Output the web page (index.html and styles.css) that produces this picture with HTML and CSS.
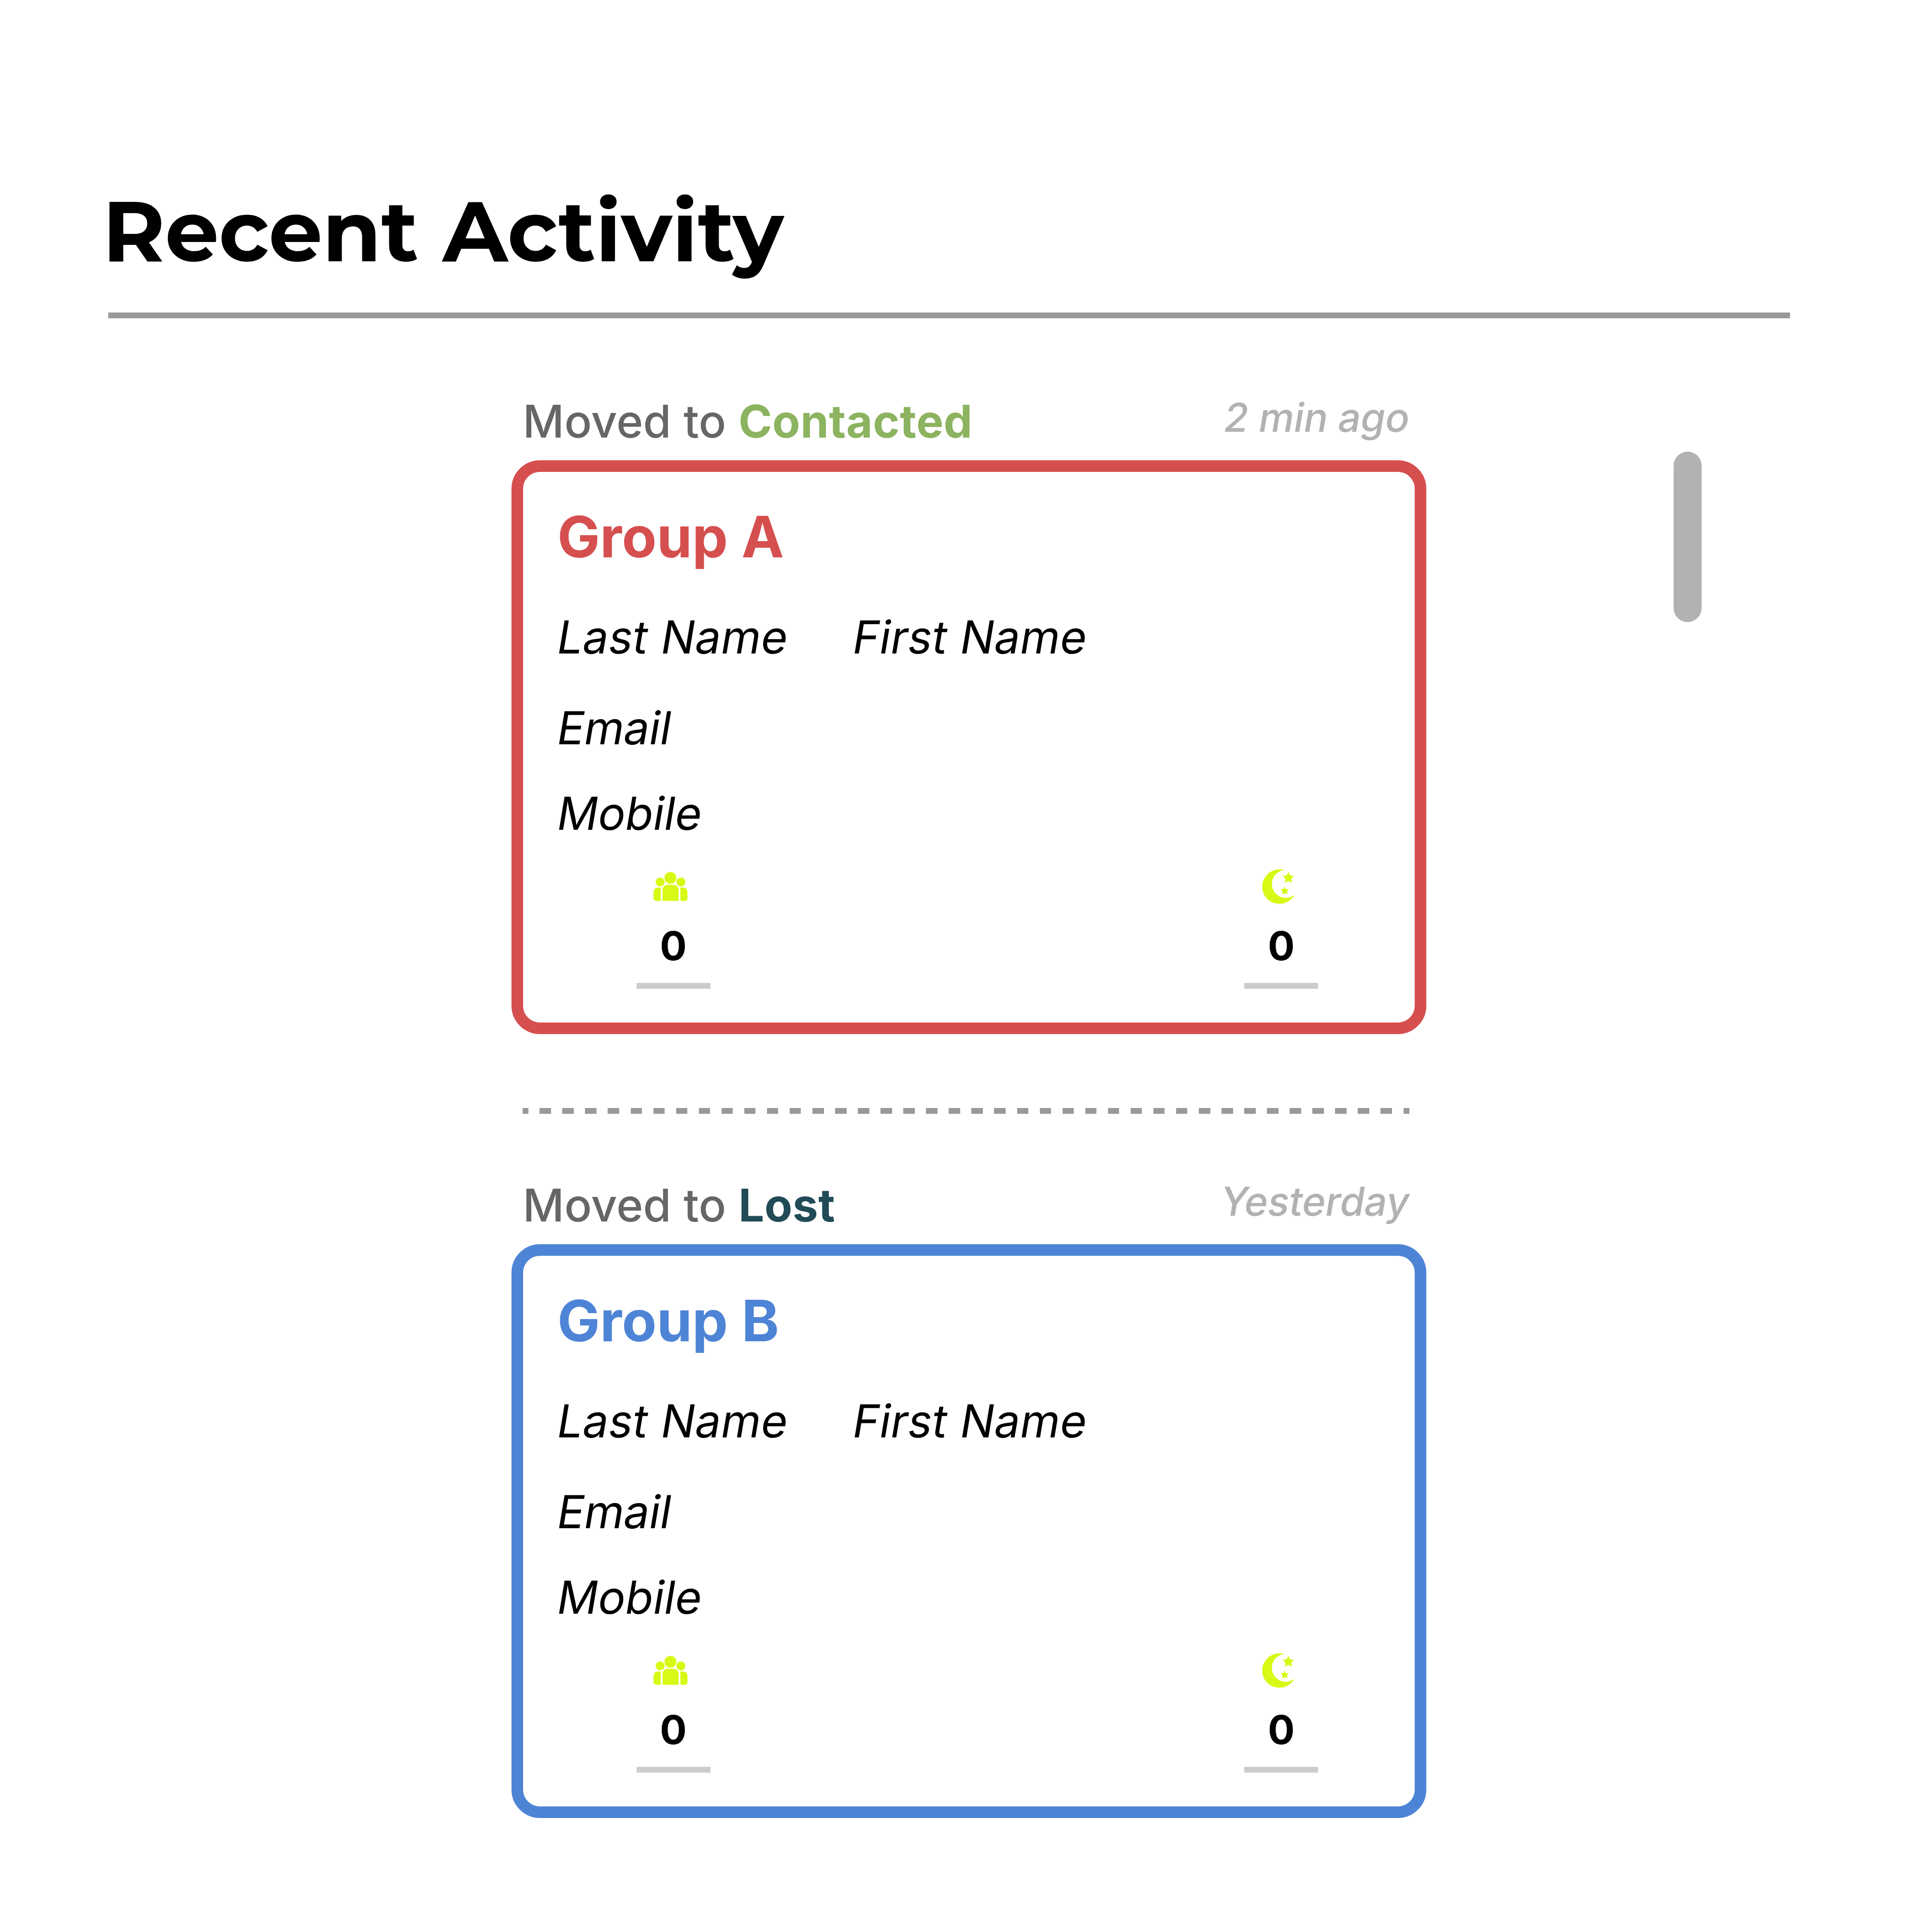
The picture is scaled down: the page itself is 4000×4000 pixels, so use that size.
FILE: index.html
```html
<!DOCTYPE html>
<html lang="en">
<head>
<meta charset="utf-8">
<title>Recent Activity</title>
<link rel="stylesheet" href="styles.css">
</head>
<body>
<svg class="sprite" aria-hidden="true">
  <symbol id="people" viewBox="0 0 212 212">
    <circle cx="105.5" cy="52.5" r="37"/>
    <circle cx="41.5" cy="78" r="28"/>
    <circle cx="170.5" cy="78" r="28"/>
    <path d="M86 96h40a30 30 0 0 1 30 30v65a5 5 0 0 1-5 5H61a5 5 0 0 1-5-5v-65a30 30 0 0 1 30-30z"/>
    <path d="M28 113h19q-2 5-2 12v71H17a17 17 0 0 1-17-17v-38a28 28 0 0 1 28-28z"/>
    <path d="M184 113h-19q2 5 2 12v71h28a17 17 0 0 0 17-17v-38a28 28 0 0 0-28-28z"/>
  </symbol>
  <symbol id="moon" viewBox="0 0 212 212" overflow="visible">
    <path d="M139.700 4.500A107 107 0 1 0 204.700 157.500A86.500 86.500 0 1 1 139.700 4.500z"/>
    <g stroke="#d8f915" stroke-width="3" stroke-linejoin="round">
      <path d="M166.700 18.500L176.500 38.500L199 41L183 58.500L187 80.500L166.700 71L146.500 80.500L150 58.500L134.500 41L157 38.500z"/>
      <path d="M143.700 110L151 124.500L167 127L156 138.500L158.500 152.500L143.700 147L129 152.500L131.500 138.500L120.500 127L136.500 124.500z"/>
    </g>
  </symbol>
</svg>
<main class="page">
  <h1 class="title">Recent Activity</h1>
  <div class="body">
    <section class="feed">
      <article class="entry entry-a">
        <header class="entry-head">
          <p class="move">Moved to <strong class="stage stage-contacted">Contacted</strong></p>
          <time class="when">2 min ago</time>
        </header>
        <div class="card">
          <h2 class="group">Group A</h2>
          <div class="names"><span class="last slanted">Last Name</span><span class="first slanted">First Name</span></div>
          <p class="email slanted">Email</p>
          <p class="mobile slanted">Mobile</p>
          <div class="stats">
            <div class="stat"><svg class="icon"><use href="#people"/></svg><span class="count">0</span></div>
            <div class="stat"><svg class="icon"><use href="#moon"/></svg><span class="count">0</span></div>
          </div>
        </div>
      </article>
      <div class="divider"></div>
      <article class="entry entry-b">
        <header class="entry-head">
          <p class="move">Moved to <strong class="stage stage-lost">Lost</strong></p>
          <time class="when">Yesterday</time>
        </header>
        <div class="card">
          <h2 class="group">Group B</h2>
          <div class="names"><span class="last slanted">Last Name</span><span class="first slanted">First Name</span></div>
          <p class="email slanted">Email</p>
          <p class="mobile slanted">Mobile</p>
          <div class="stats">
            <div class="stat"><svg class="icon"><use href="#people"/></svg><span class="count">0</span></div>
            <div class="stat"><svg class="icon"><use href="#moon"/></svg><span class="count">0</span></div>
          </div>
        </div>
      </article>
    </section>
    <div class="scroll-thumb"></div>
  </div>
</main>
</body>
</html>
```
FILE: styles.css
```css
:root {
  --u: calc(4000px / 340);
}

* {
  box-sizing: border-box;
  margin: 0;
  padding: 0;
}

body {
  background: #fff;
  color: #000;
  font-family: Inter, "Liberation Sans", sans-serif;
}

.sprite {
  position: absolute;
  width: 0;
  height: 0;
}

.page {
  width: 4000px;
  height: 4000px;
  padding: 372.4px calc(25 * var(--u)) 0 calc(19 * var(--u));
  overflow: hidden;
}

.title {
  height: 286.6px;
  border-bottom: 12px solid #999;
  font: 700 calc(15 * var(--u)) / calc(18 * var(--u)) Montserrat, Inter, sans-serif;
  text-indent: -11.5px;
}

.body {
  display: flex;
  align-items: flex-start;
  padding: 146.4px 0 0 calc(71 * var(--u));
}

.feed {
  width: calc(161 * var(--u));
}

.entry-a {
  --accent: #d64f4f;
}

.entry-b {
  --accent: #4e84d6;
}

.entry-head {
  display: flex;
  justify-content: space-between;
  align-items: flex-start;
  height: 147.6px;
  padding: 0 calc(3 * var(--u)) 0 calc(2 * var(--u));
  line-height: calc(10 * var(--u));
  white-space: nowrap;
}

.move {
  margin-top: 8.6px;
  color: #666;
  font-size: calc(8 * var(--u));
  font-weight: 500;
  letter-spacing: 0.2px;
}

.stage {
  font-weight: 700;
  letter-spacing: 0.55px;
}

.stage-contacted {
  color: #8cb35f;
}

.stage-lost {
  color: #204b57;
}

.when {
  margin: 0.8px 4px 0 0;
  color: #b2b2b2;
  font-size: calc(7 * var(--u));
  font-weight: 500;
  letter-spacing: -0.2px;
  transform: skewX(-9.4deg);
  transform-origin: 0 88.8px;
}

.card {
  height: calc(101 * var(--u));
  padding: 63.6px 0 0 70.1px;
  border: 24px solid var(--accent);
  border-radius: calc(5 * var(--u));
  font-size: calc(8 * var(--u));
  line-height: calc(10 * var(--u));
}

.slanted {
  transform: translateX(-4px) skewX(-9.4deg);
  transform-origin: 0 93px;
}

.group {
  margin-left: 1px;
  color: var(--accent);
  font-size: calc(10 * var(--u));
  font-weight: 700;
  letter-spacing: 0.1px;
  line-height: calc(12 * var(--u));
}

.names {
  display: flex;
  margin-top: 78.9px;
}

.last {
  width: calc(52 * var(--u));
  letter-spacing: 0.4px;
}

.first {
  letter-spacing: 0.3px;
}

.email {
  margin-top: 70.7px;
  letter-spacing: -0.3px;
}

.mobile {
  margin-top: 59px;
}

.stats {
  display: flex;
  gap: calc(94 * var(--u));
  margin: 56.4px 0 0 calc(14 * var(--u));
}

.stat {
  width: calc(13 * var(--u));
  height: 247.6px;
  border-bottom: 12px solid #ccc;
}

.icon {
  display: block;
  width: calc(6 * var(--u));
  height: calc(6 * var(--u));
  margin-left: 35.7px;
  fill: #d8f915;
  overflow: visible;
}

.count {
  display: block;
  margin-top: 30px;
  font-size: calc(7 * var(--u));
  font-weight: 700;
  text-align: center;
}

.divider {
  width: calc(156 * var(--u));
  height: var(--u);
  margin: calc(13 * var(--u)) 0 122.6px calc(2 * var(--u));
  background: repeating-linear-gradient(90deg, #999 0 var(--u), transparent var(--u) calc(3 * var(--u)), #999 calc(3 * var(--u)) calc(4 * var(--u)));
}

.scroll-thumb {
  width: calc(5 * var(--u));
  height: calc(30 * var(--u));
  margin: 129.9px 0 0 511.6px;
  border-radius: calc(2.5 * var(--u));
  background: #b2b2b2;
}
```
